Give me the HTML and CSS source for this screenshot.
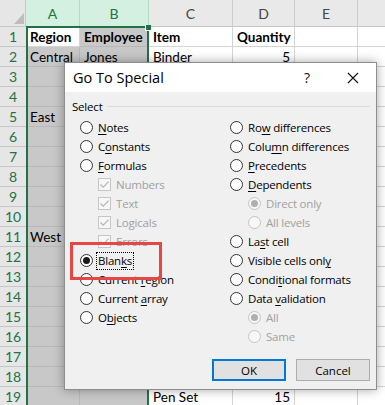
FILE: index.html
```html
<!DOCTYPE html>
<html>
<head>
<meta charset="utf-8">
<link rel="stylesheet" href="styles.css">
</head>
<body>
<div class="app">
  <div class="sheet">
    <div class="corner"><svg width="26" height="27" viewBox="0 0 26 27"><polygon points="14,24 24,24 24,13" fill="#bdbdbd"/></svg></div>
    <div class="ch chsel">A</div>
    <div class="ch chsel">B</div>
    <div class="ch">C</div>
    <div class="ch">D</div>
    <div class="ch">E</div>
    <div class="ch"></div>

    <div class="rh">1</div><div class="c active b">Region</div><div class="c sel b">Employee</div><div class="c b">Item</div><div class="c b">Quantity</div><div class="c"></div><div class="c"></div>
    <div class="rh">2</div><div class="c sel">Central</div><div class="c sel">Jones</div><div class="c">Binder</div><div class="c num">5</div><div class="c"></div><div class="c"></div>
    <div class="rh">3</div><div class="c sel"></div><div class="c sel"></div><div class="c"></div><div class="c"></div><div class="c"></div><div class="c"></div>
    <div class="rh">4</div><div class="c sel"></div><div class="c sel"></div><div class="c"></div><div class="c"></div><div class="c"></div><div class="c"></div>
    <div class="rh">5</div><div class="c sel">East</div><div class="c sel"></div><div class="c"></div><div class="c"></div><div class="c"></div><div class="c"></div>
    <div class="rh">6</div><div class="c sel"></div><div class="c sel"></div><div class="c"></div><div class="c"></div><div class="c"></div><div class="c"></div>
    <div class="rh">7</div><div class="c sel"></div><div class="c sel"></div><div class="c"></div><div class="c"></div><div class="c"></div><div class="c"></div>
    <div class="rh">8</div><div class="c sel"></div><div class="c sel"></div><div class="c"></div><div class="c"></div><div class="c"></div><div class="c"></div>
    <div class="rh">9</div><div class="c sel"></div><div class="c sel"></div><div class="c"></div><div class="c"></div><div class="c"></div><div class="c"></div>
    <div class="rh">10</div><div class="c sel"></div><div class="c sel"></div><div class="c"></div><div class="c"></div><div class="c"></div><div class="c"></div>
    <div class="rh">11</div><div class="c sel">West</div><div class="c sel"></div><div class="c"></div><div class="c"></div><div class="c"></div><div class="c"></div>
    <div class="rh">12</div><div class="c sel"></div><div class="c sel"></div><div class="c"></div><div class="c"></div><div class="c"></div><div class="c"></div>
    <div class="rh">13</div><div class="c sel"></div><div class="c sel"></div><div class="c"></div><div class="c"></div><div class="c"></div><div class="c"></div>
    <div class="rh">14</div><div class="c sel"></div><div class="c sel"></div><div class="c"></div><div class="c"></div><div class="c"></div><div class="c"></div>
    <div class="rh">15</div><div class="c sel"></div><div class="c sel"></div><div class="c"></div><div class="c"></div><div class="c"></div><div class="c"></div>
    <div class="rh">16</div><div class="c sel"></div><div class="c sel"></div><div class="c"></div><div class="c"></div><div class="c"></div><div class="c"></div>
    <div class="rh">17</div><div class="c sel"></div><div class="c sel"></div><div class="c"></div><div class="c"></div><div class="c"></div><div class="c"></div>
    <div class="rh">18</div><div class="c sel"></div><div class="c sel"></div><div class="c"></div><div class="c"></div><div class="c"></div><div class="c"></div>
    <div class="rh">19</div><div class="c sel"></div><div class="c sel"></div><div class="c">Pen Set</div><div class="c num">15</div><div class="c"></div><div class="c"></div>
  </div>

  <div class="selection"><span class="handle"></span></div>

  <div class="dialog">
    <div class="titlebar">
      <span class="title">Go To Special</span>
      <span class="tbtn">?</span>
      <span class="tbtn"><svg width="12" height="12" viewBox="0 0 12 12"><path d="M1 1 L11 11 M11 1 L1 11" stroke="#111" stroke-width="1.1" fill="none"/></svg></span>
    </div>
    <div class="body">
      <div class="group-head"><span>Select</span><span class="line"></span></div>
      <div class="options">
        <div class="col">
          <div class="opt"><span class="radio"></span><span><u>N</u>otes</span></div>
          <div class="opt"><span class="radio"></span><span>C<u>o</u>nstants</span></div>
          <div class="opt"><span class="radio"></span><span><u>F</u>ormulas</span></div>
          <div class="opt sub dis"><span class="check"><svg width="11" height="11" viewBox="0 0 11 11"><path d="M1.5 5.5 L4.2 8.2 L9.6 2.6" stroke="#b4b4b4" stroke-width="1.2" fill="none"/></svg></span><span>Numbers</span></div>
          <div class="opt sub dis"><span class="check"><svg width="11" height="11" viewBox="0 0 11 11"><path d="M1.5 5.5 L4.2 8.2 L9.6 2.6" stroke="#b4b4b4" stroke-width="1.2" fill="none"/></svg></span><span>Text</span></div>
          <div class="opt sub dis"><span class="check"><svg width="11" height="11" viewBox="0 0 11 11"><path d="M1.5 5.5 L4.2 8.2 L9.6 2.6" stroke="#b4b4b4" stroke-width="1.2" fill="none"/></svg></span><span>Logicals</span></div>
          <div class="opt sub dis"><span class="check"><svg width="11" height="11" viewBox="0 0 11 11"><path d="M1.5 5.5 L4.2 8.2 L9.6 2.6" stroke="#b4b4b4" stroke-width="1.2" fill="none"/></svg></span><span>Errors</span></div>
          <div class="opt"><span class="radio on"><span class="dot"></span></span><span class="focus">Blan<u>k</u>s</span></div>
          <div class="opt"><span class="radio"></span><span>Current <u>r</u>egion</span></div>
          <div class="opt"><span class="radio"></span><span>Current <u>a</u>rray</span></div>
          <div class="opt"><span class="radio"></span><span>O<u>b</u>jects</span></div>
        </div>
        <div class="col">
          <div class="opt"><span class="radio"></span><span>Ro<u>w</u> differences</span></div>
          <div class="opt"><span class="radio"></span><span>Colu<u>m</u>n differences</span></div>
          <div class="opt"><span class="radio"></span><span><u>P</u>recedents</span></div>
          <div class="opt"><span class="radio"></span><span><u>D</u>ependents</span></div>
          <div class="opt sub dis"><span class="radio on"><span class="dot"></span></span><span>Direct only</span></div>
          <div class="opt sub dis"><span class="radio"></span><span>All levels</span></div>
          <div class="opt"><span class="radio"></span><span>La<u>s</u>t cell</span></div>
          <div class="opt"><span class="radio"></span><span>Visible cells onl<u>y</u></span></div>
          <div class="opt"><span class="radio"></span><span>Condi<u>t</u>ional formats</span></div>
          <div class="opt"><span class="radio"></span><span>Data <u>v</u>alidation</span></div>
          <div class="opt sub dis"><span class="radio on"><span class="dot"></span></span><span>All</span></div>
          <div class="opt sub dis"><span class="radio"></span><span>Same</span></div>
        </div>
      </div>
      <div class="buttons">
        <button class="btn default">OK</button>
        <button class="btn">Cancel</button>
      </div>
    </div>
  </div>

  <div class="highlight"></div>
</div>
</body>
</html>
```
FILE: styles.css
```css
html, body {
  margin: 0;
  padding: 0;
}
body {
  width: 385px;
  height: 405px;
  overflow: hidden;
  background: #fff;
}
.app {
  position: relative;
  width: 385px;
  height: 405px;
  overflow: hidden;
}
.sheet {
  display: grid;
  grid-template-columns: 26px 54px 69px 84px 62px 63px 40px;
  grid-template-rows: 27px repeat(19, 20px);
  font-family: Lato, "Liberation Sans", sans-serif;
  font-size: 13.5px;
  color: #000;
}
.corner {
  background: #e6e6e6;
  border-right: 1px solid #c8c8c8;
  border-bottom: 1px solid #c8c8c8;
  box-sizing: border-box;
  overflow: hidden;
}
.corner svg { display: block; }
.ch {
  background: #e9e9e9;
  border-right: 1px solid #cdcdcd;
  border-bottom: 1px solid #c6c6c6;
  box-sizing: border-box;
  color: #444;
  text-align: center;
  line-height: 28px;
  font-size: 14px;
}
.ch.chsel {
  background: #d3f0e0;
  color: #217346;
  border-right-color: #b6d9c4;
}
.rh {
  background: #e6e6e6;
  border-bottom: 1px solid #c6c6c6;
  box-sizing: border-box;
  color: #217346;
  text-align: center;
  line-height: 20px;
  font-size: 14px;
}
.c {
  border-right: 1px solid #d4d4d4;
  border-bottom: 1px solid #d4d4d4;
  box-sizing: border-box;
  padding-left: 4px;
  padding-right: 4px;
  line-height: 20px;
  white-space: nowrap;
  overflow: visible;
}
.c.b { font-weight: bold; }
.c.num { text-align: right; }
.c.sel {
  background: #c8c8c8;
  border-right-color: #b8b8b8;
  border-bottom-color: #b8b8b8;
}
.c.active { background: #fff; }

.selection {
  position: absolute;
  left: 26px;
  top: 26px;
  width: 123px;
  height: 400px;
  box-sizing: border-box;
  border: 2px solid #217346;
  border-bottom: none;
}
.handle {
  position: absolute;
  right: -4px;
  top: -3px;
  width: 5px;
  height: 5px;
  background: #217346;
  border: 1px solid #fff;
  border-top: none;
  border-right: none;
}

.dialog {
  position: absolute;
  left: 64px;
  top: 62px;
  width: 313px;
  height: 328px;
  box-sizing: border-box;
  border: 1px solid #8e8e8e;
  background: #f0f0f0;
  box-shadow: 0 0 10px rgba(0, 0, 0, 0.35);
  display: flex;
  flex-direction: column;
  font-family: "Open Sans", "Noto Sans", sans-serif;
  font-size: 11.5px;
  letter-spacing: -0.2px;
  color: #000;
}
.titlebar {
  height: 29px;
  flex: none;
  background: #fff;
  display: flex;
  align-items: center;
  padding-left: 8px;
}
.title {
  flex: 1;
  font-size: 14.5px;
  letter-spacing: 0;
  color: #000;
}
.tbtn {
  width: 46px;
  height: 29px;
  display: flex;
  align-items: center;
  justify-content: center;
  font-size: 14px;
  color: #111;
}
.body {
  flex: 1;
  display: flex;
  flex-direction: column;
  padding: 5px 6px 8px 7px;
}
.group-head {
  display: flex;
  align-items: center;
  height: 18px;
  gap: 4px;
}
.group-head .line {
  flex: 1;
  height: 1px;
  background: #dcdcdc;
  margin-top: 1px;
}
.options {
  display: flex;
  padding-left: 8px;
  margin-top: 3px;
}
.col {
  display: flex;
  flex-direction: column;
}
.col:first-child { width: 150px; }
.opt {
  height: 19px;
  display: flex;
  align-items: center;
  gap: 5px;
  white-space: nowrap;
}
.opt.sub { padding-left: 18px; }
.opt.dis { color: #a0a0a0; }
.radio {
  width: 13px;
  height: 13px;
  box-sizing: border-box;
  border: 1px solid #333;
  border-radius: 50%;
  background: #fff;
  display: flex;
  align-items: center;
  justify-content: center;
  flex: none;
}
.dot {
  width: 7px;
  height: 7px;
  border-radius: 50%;
  background: #1a1a1a;
}
.dis .radio {
  border-color: #c4c4c4;
  background: #f7f7f7;
}
.dis .dot { background: #b0b0b0; }
.check {
  width: 13px;
  height: 13px;
  box-sizing: border-box;
  border: 1px solid #c6c6c6;
  background: #f7f7f7;
  display: flex;
  align-items: center;
  justify-content: center;
  flex: none;
}
.check svg { display: block; }
.focus {
  outline: 1px dotted #000;
  outline-offset: 0;
  padding: 0 1px;
  margin-left: -1px;
  line-height: 16px;
}
u { text-underline-offset: 2px; }
.buttons {
  margin-top: auto;
  display: flex;
  justify-content: flex-end;
  gap: 10px;
}
.btn {
  width: 74px;
  height: 22px;
  box-sizing: border-box;
  background: #e1e1e1;
  border: 1px solid #adadad;
  font-family: "Open Sans", "Noto Sans", sans-serif;
  font-size: 11.5px;
  color: #000;
  padding: 0;
  margin: 0;
}
.btn.default {
  border: 2px solid #0078d7;
}
.highlight {
  position: absolute;
  left: 70px;
  top: 242px;
  width: 92px;
  height: 38px;
  box-sizing: border-box;
  border: 3px solid #e84545;
}
```
